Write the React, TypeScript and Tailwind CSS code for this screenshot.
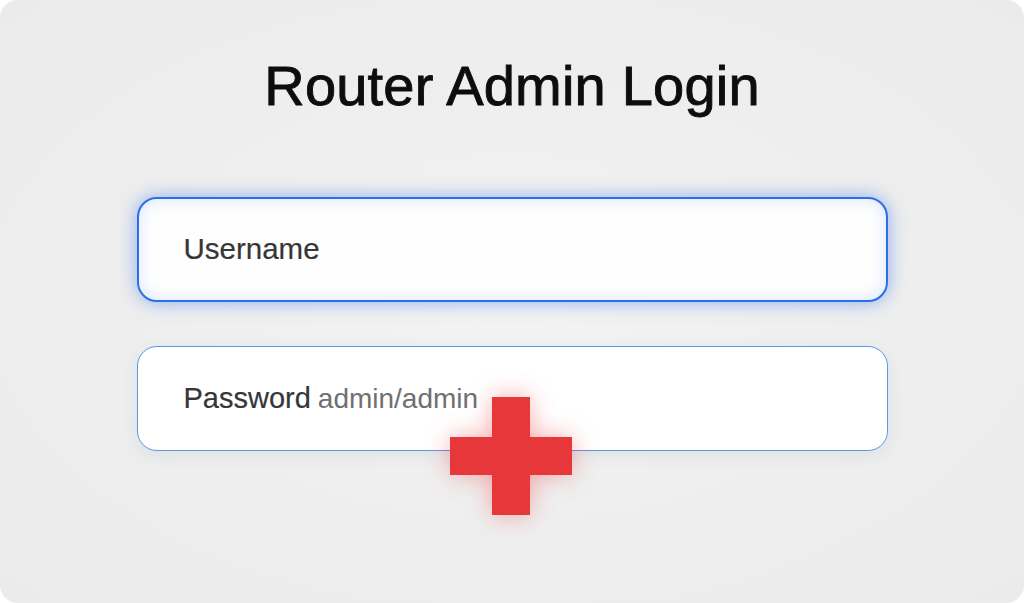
import React from 'react';

function RedCross() {
  // plus-shaped mark lying over the password field
  return (
    <svg
      width="122"
      height="118"
      viewBox="0 0 122 118"
      className="absolute left-[450px] top-[397px] drop-shadow-[0_0_12px_rgba(235,50,50,0.4)]"
    >
      <path d="M42 0H80V40H122V78H80V118H42V78H0V40H42Z" fill="#e8373a" />
    </svg>
  );
}

export default function App() {
  return (
    <div className="w-[1024px] h-[603px] bg-white font-['Liberation_Sans',Arial,sans-serif]">
      <div className="relative h-full rounded-[18px] bg-[radial-gradient(ellipse_at_center,_#f3f3f3_0%,_#eeeeee_55%,_#ebebeb_100%)] flex flex-col items-center pt-[54px]">
        <h1 className="text-[56px] leading-[64px] text-[#0d0d0d] tracking-[0.2px] [-webkit-text-stroke:0.9px_#0d0d0d]">
          Router Admin Login
        </h1>

        <div className="mt-[79px] w-[751px] flex flex-col gap-[44px]">
          {/* focused field */}
          <div className="h-[105px] rounded-[20px] border-[2.5px] border-[#2a6fe6] bg-[#fefefe] shadow-[0_0_18px_rgba(40,110,240,0.5),inset_0_0_16px_rgba(60,130,245,0.2)] flex items-center pl-[45px]">
            <span className="text-[29.5px] text-[#363636] [-webkit-text-stroke:0.2px_#363636]">Username</span>
          </div>

          <div className="h-[105px] rounded-[20px] border-[1.5px] border-[#5a98e6] bg-white shadow-[0_4px_16px_rgba(60,90,140,0.09)] flex items-center pl-[46px]">
            <span className="text-[29px] text-[#363636] [-webkit-text-stroke:0.2px_#363636]">Password</span>
            <span className="text-[28px] text-[#707070] ml-[7px]">admin/admin</span>
          </div>
        </div>

        <RedCross />
      </div>
    </div>
  );
}
